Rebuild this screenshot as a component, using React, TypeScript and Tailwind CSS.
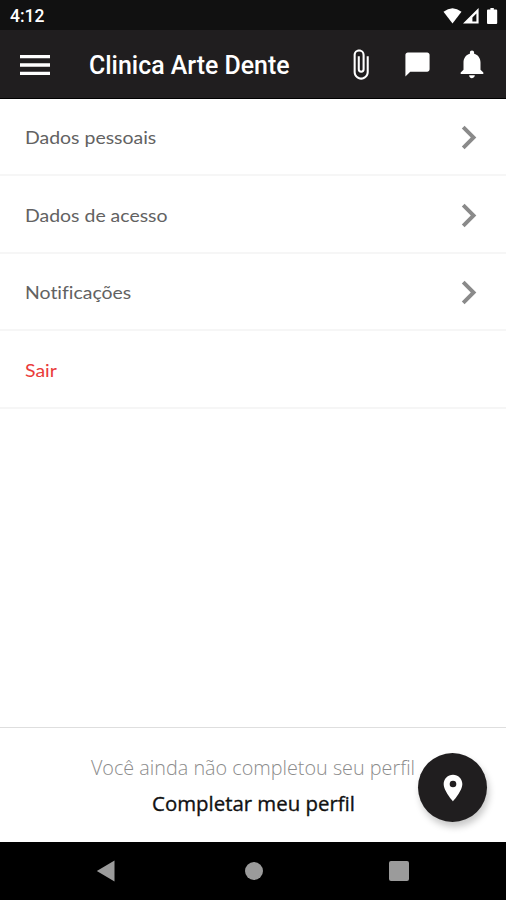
import { MdAttachFile, MdChatBubble, MdChevronRight, MdLocationOn, MdMenu, MdNotifications } from 'react-icons/md'
import clsx from 'clsx'

// ─── Menu data ───────────────────────────────────────────────────────────────

interface MenuItem {
  label: string
  danger?: boolean
}

const MENU_ITEMS: MenuItem[] = [
  { label: 'Dados pessoais' },
  { label: 'Dados de acesso' },
  { label: 'Notificações' },
  { label: 'Sair', danger: true },
]

// ─── Status bar ──────────────────────────────────────────────────────────────

function StatusBar() {
  return (
    <div className="flex h-[30px] shrink-0 items-center justify-between bg-[#111111] pl-2.5 pr-[7px] text-white">
      <span className="pt-[3px] font-['Roboto',sans-serif] text-[17.5px] font-medium leading-none">4:12</span>
      <svg className="mt-px h-[18px] w-[56px]" viewBox="0 0 56 18" fill="currentColor" aria-hidden="true">
        <path d="M0.5 4.8Q9.5 -2.4 18.5 4.8L9.5 16.4Z" />
        <path fillRule="evenodd" d="M35.6 1v15.6H20ZM33.4 6.6L29.4 10.6v4h4Z" />
        <path d="M47.4 1h3.4v1.4h2.4q1 0 1 1v12.6q0 1-1 1h-8.2q-1 0-1-1V3.4q0-1 1-1h2.4Z" />
      </svg>
    </div>
  )
}

// ─── App bar ─────────────────────────────────────────────────────────────────

function AppBar() {
  return (
    <header className="flex h-[69px] shrink-0 items-center border-b border-black bg-[#201e1f] pl-[15px] pr-[17px] text-white">
      <button aria-label="Menu" className="mt-px">
        <MdMenu className="size-10" />
      </button>
      <h1 className="ml-[34px] mt-1 font-['Roboto',sans-serif] text-[24.9px] font-medium leading-[26px]">
        Clinica Arte Dente
      </h1>
      <div className="ml-auto flex items-center">
        <button aria-label="Anexos">
          <MdAttachFile className="size-[33px]" />
        </button>
        <button aria-label="Mensagens" className="ml-[26px]">
          <MdChatBubble className="size-[29px]" />
        </button>
        <button aria-label="Alertas" className="ml-[23px]">
          <MdNotifications className="size-[34px]" />
        </button>
      </div>
    </header>
  )
}

function MenuRow({ label, danger = false }: MenuItem) {
  return (
    <li className="flex h-[77.8px] items-center justify-between border-b-2 border-[#f6f6f6] pl-[25px] pr-[14px]">
      <span
        className={clsx(
          "mt-0.5 origin-left scale-x-[1.08] font-['Lato',sans-serif] text-[18px] leading-none [font-variant-ligatures:none]",
          danger ? 'text-[#ea3b3a]' : 'text-[#626262]',
        )}
      >
        {label}
      </span>
      {!danger && <MdChevronRight className="mt-[3px] size-[47px] text-[#8a8a8a]" />}
    </li>
  )
}

// ─── Footer prompt and system buttons ────────────────────────────────────────

function ProfilePrompt() {
  return (
    <section className="relative flex h-[115px] shrink-0 flex-col items-center border-t border-[#dedede] pt-[26px] font-['Open_Sans',sans-serif]">
      <p className="text-[19.8px] font-light leading-[28px] text-[#8c8c8c]">Você ainda não completou seu perfil</p>
      <button className="mt-[7px] pl-px text-[20.4px] font-medium leading-[28px] text-[#111111] [-webkit-text-stroke:0.35px_#111111]">
        Completar meu perfil
      </button>
      <button
        aria-label="Localização"
        className="absolute right-[19px] top-[25px] flex size-[69px] items-center justify-center rounded-full bg-[#201e1f] text-white shadow-[2px_5px_7px_rgba(0,0,0,0.22)]"
      >
        <MdLocationOn className="size-8" />
      </button>
    </section>
  )
}

function NavigationBar() {
  return (
    <nav className="flex h-[58px] shrink-0 items-center bg-black pl-[96px] text-[#9b9b9b]">
      <svg className="h-[22px] w-[19px]" viewBox="0 0 19 22" fill="currentColor" aria-hidden="true">
        <path d="M18.5 0.5v21L0.8 11Z" />
      </svg>
      <span className="ml-[130px] size-[18px] rounded-full bg-current" />
      <span className="ml-[126px] size-5 rounded-[2px] bg-current" />
    </nav>
  )
}

export default function App() {
  return (
    <div className="flex h-[900px] w-[506px] flex-col overflow-hidden bg-white">
      <StatusBar />
      <AppBar />
      <ul className="-mt-px flex-1">
        {MENU_ITEMS.map((item) => (
          <MenuRow key={item.label} {...item} />
        ))}
      </ul>
      <ProfilePrompt />
      <NavigationBar />
    </div>
  )
}
